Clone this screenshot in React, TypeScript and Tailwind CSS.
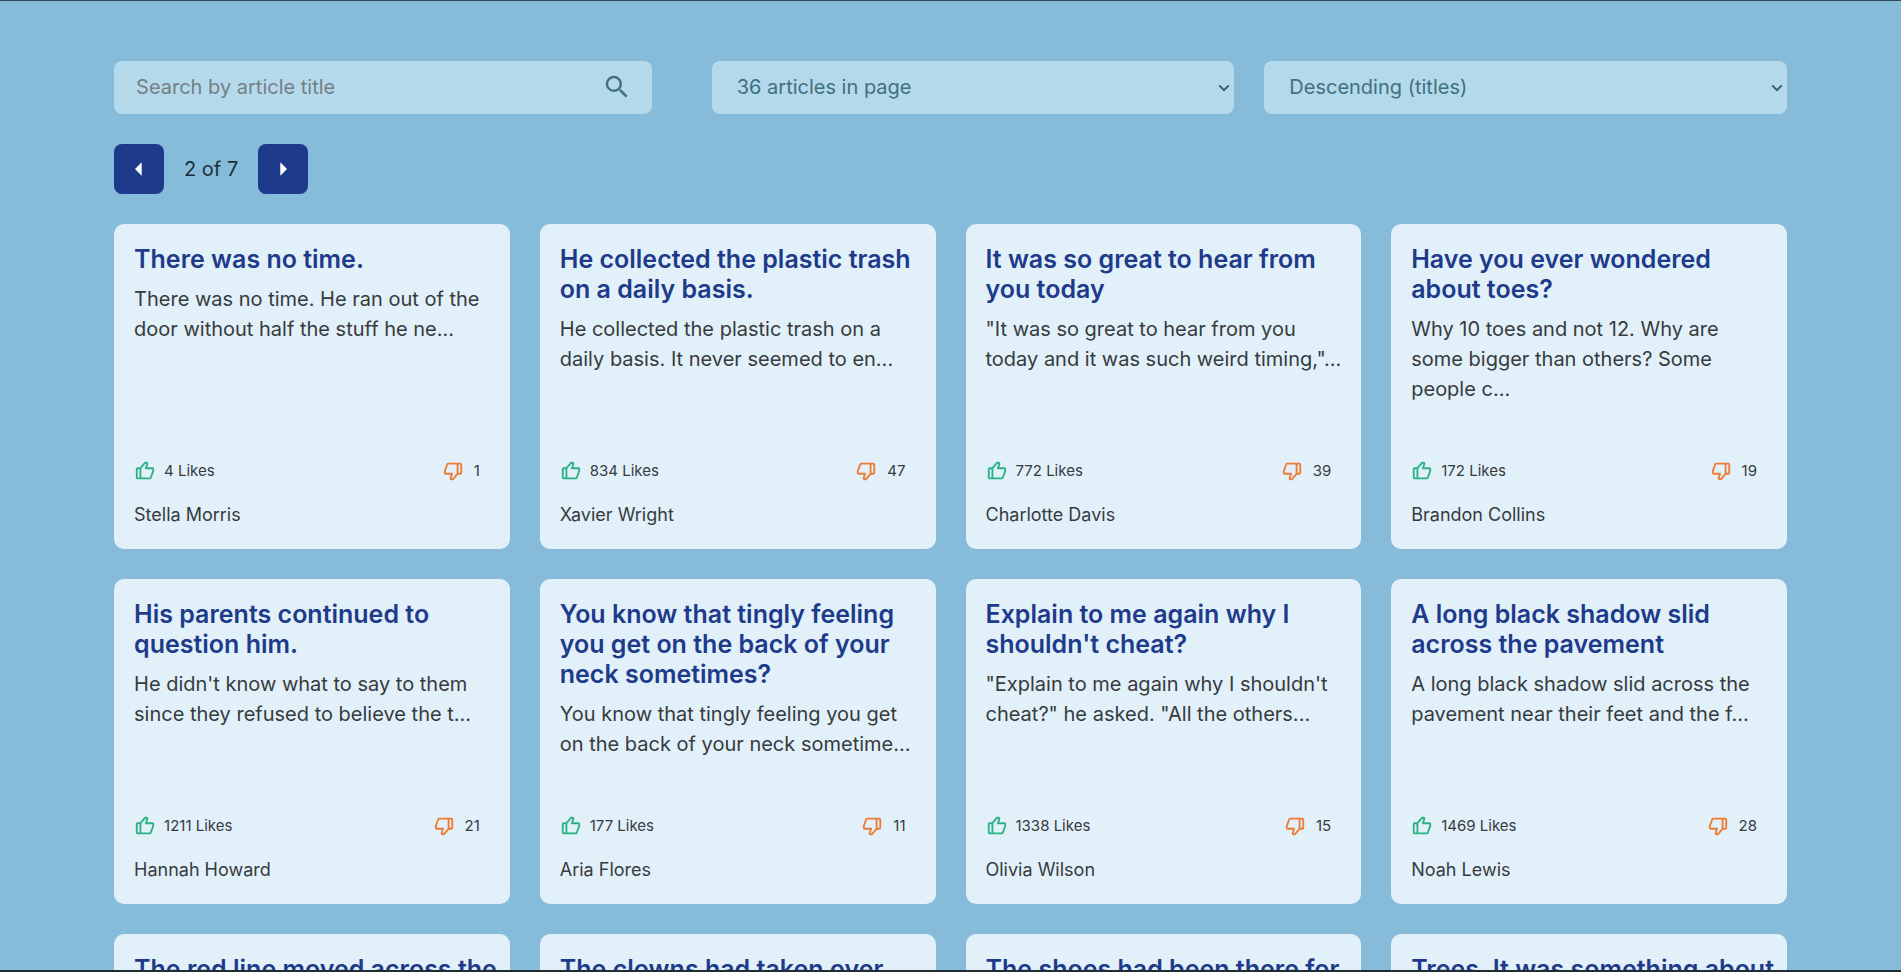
import { useState } from "react";
import { BiDislike, BiLike } from "react-icons/bi";
import { MdArrowLeft, MdArrowRight, MdSearch } from "react-icons/md";

type Article = {
  title: string;
  excerpt: string;
  likes: number;
  dislikes: number;
  author: string;
};

const articles: Article[] = [
  { title: "There was no time.", excerpt: "There was no time. He ran out of the door without half the stuff he ne...", likes: 4, dislikes: 1, author: "Stella Morris" },
  { title: "He collected the plastic trash on a daily basis.", excerpt: "He collected the plastic trash on a daily basis. It never seemed to en...", likes: 834, dislikes: 47, author: "Xavier Wright" },
  { title: "It was so great to hear from you today", excerpt: "\"It was so great to hear from you today and it was such weird timing,\"...", likes: 772, dislikes: 39, author: "Charlotte Davis" },
  { title: "Have you ever wondered about toes?", excerpt: "Why 10 toes and not 12. Why are some bigger than others? Some people c...", likes: 172, dislikes: 19, author: "Brandon Collins" },
  { title: "His parents continued to question him.", excerpt: "He didn't know what to say to them since they refused to believe the t...", likes: 1211, dislikes: 21, author: "Hannah Howard" },
  { title: "You know that tingly feeling you get on the back of your neck sometimes?", excerpt: "You know that tingly feeling you get on the back of your neck sometime...", likes: 177, dislikes: 11, author: "Aria Flores" },
  { title: "Explain to me again why I shouldn't cheat?", excerpt: "\"Explain to me again why I shouldn't cheat?\" he asked. \"All the others...", likes: 1338, dislikes: 15, author: "Olivia Wilson" },
  { title: "A long black shadow slid across the pavement", excerpt: "A long black shadow slid across the pavement near their feet and the f...", likes: 1469, dislikes: 28, author: "Noah Lewis" },
  { title: "The red line moved across the", excerpt: "", likes: 0, dislikes: 0, author: "" },
  { title: "The clowns had taken over", excerpt: "", likes: 0, dislikes: 0, author: "" },
  { title: "The shoes had been there for", excerpt: "", likes: 0, dislikes: 0, author: "" },
  { title: "Trees. It was something about", excerpt: "", likes: 0, dislikes: 0, author: "" },
];

function ArticleCard({ article }: { article: Article }) {
  return (
    <article className="flex min-h-[325px] flex-col rounded-[10px] bg-[#e1f0f9] py-5 pr-3 pl-5 text-[#373b3e]">
      <h2 className="text-[25px] leading-[30px] font-semibold text-[#1e3a8a]">{article.title}</h2>
      {article.excerpt && (
        <>
          <p className="mt-2.5 text-xl leading-[30px]">{article.excerpt}</p>
          <div className="mt-auto flex items-center justify-between pr-[18px] text-[15px] leading-[22px]">
            <span className="flex items-center gap-2">
              <BiLike className="size-[22px] text-[#2ab184]" aria-hidden="true" />
              {article.likes} Likes
            </span>
            <span className="flex items-center gap-2.5">
              <BiDislike className="size-[22px] text-[#ee7a34]" aria-hidden="true" />
              {article.dislikes}
            </span>
          </div>
          <p className="mt-[19px] text-lg leading-7">{article.author}</p>
        </>
      )}
    </article>
  );
}

const fieldClass = "h-[53px] w-full rounded-lg bg-[#b4d9eb] pb-0.5 text-xl text-[#41707f] outline-none";
const pagerClass = "flex size-[50px] items-center justify-center rounded-lg bg-[#1e3a8a] text-white";

function SelectField({ label, option }: { label: string; option: string }) {
  return (
    <div className="relative min-w-0 flex-1">
      <select aria-label={label} className={`${fieldClass} appearance-none pl-[25px]`}>
        <option>{option}</option>
      </select>
      <svg
        viewBox="0 0 12 12"
        className="pointer-events-none absolute inset-y-0 right-1 my-auto size-3 text-[#34606f]"
        fill="none"
        stroke="currentColor"
        strokeWidth="2"
        aria-hidden="true"
      >
        <path d="M1.2 3.4 6 8.2 10.8 3.4" />
      </svg>
    </div>
  );
}

export default function App() {
  const [query, setQuery] = useState("");

  return (
    <div className="h-screen overflow-hidden border-t border-b-2 border-t-[#34495e] border-b-[#212b32] bg-[#86bcda] px-[6%] font-['Inter',sans-serif]">
      <form className="mt-[60px] grid grid-cols-[1fr_2fr] gap-[60px]" onSubmit={(event) => event.preventDefault()}>
        <div className={`${fieldClass} flex items-center pr-5`}>
          <input
            type="text"
            aria-label="Search by article title"
            placeholder="Search by article title"
            value={query}
            onChange={(event) => setQuery(event.target.value)}
            className="h-full min-w-0 flex-1 bg-transparent pl-[22px] outline-none placeholder:text-[#757f85]"
          />
          <button type="submit" aria-label="Search">
            <MdSearch className="size-[30px]" aria-hidden="true" />
          </button>
        </div>
        <div className="flex gap-[30px]">
          <SelectField label="Articles in page" option="36 articles in page" />
          <SelectField label="Sort order" option="Descending (titles)" />
        </div>
      </form>

      <nav aria-label="Pagination" className="mt-[30px] flex items-center gap-5 text-xl text-[#1b2f3a]">
        <button type="button" aria-label="Previous page" className={pagerClass}>
          <MdArrowLeft className="size-8" aria-hidden="true" />
        </button>
        <span>2 of 7</span>
        <button type="button" aria-label="Next page" className={pagerClass}>
          <MdArrowRight className="size-8" aria-hidden="true" />
        </button>
      </nav>

      <main className="mt-[30px] grid grid-cols-4 gap-[30px]">
        {articles.map((article) => (
          <ArticleCard key={article.title} article={article} />
        ))}
      </main>
    </div>
  );
}
